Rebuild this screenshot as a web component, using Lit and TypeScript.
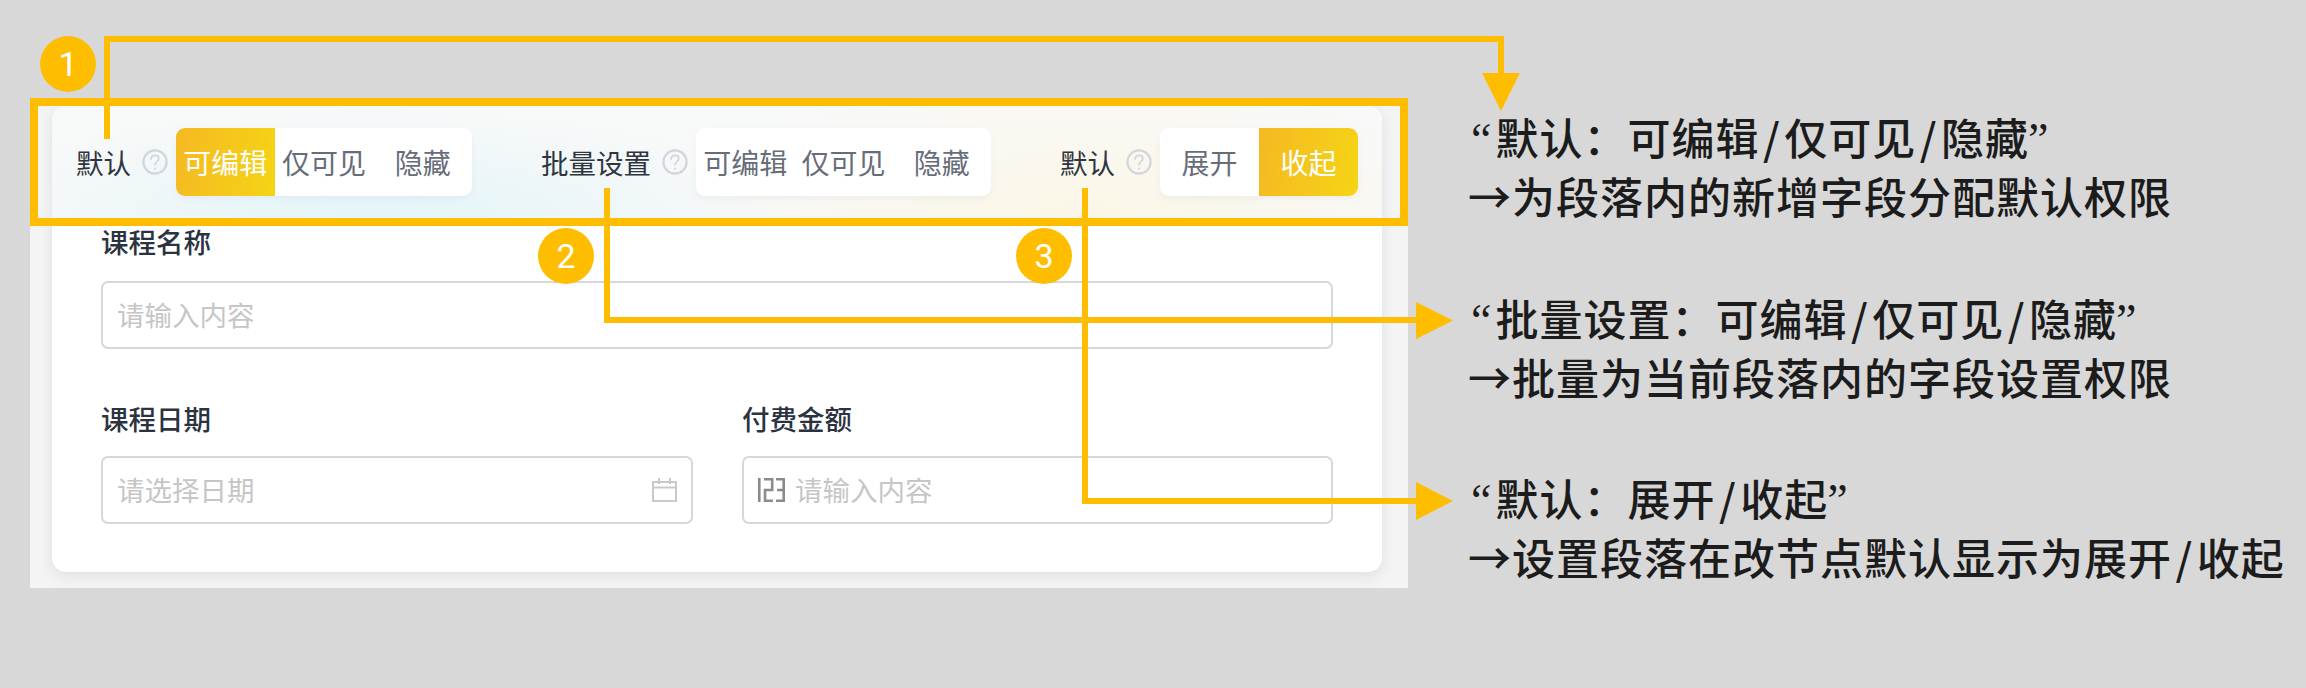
import { LitElement, html, css, svg } from "lit";
import { customElement } from "lit/decorators.js";

const helpIcon = html`<svg class="help" width="26" height="26" viewBox="0 0 26 26" fill="none" stroke="#d2d5dc" stroke-width="2.2"><circle cx="13" cy="13" r="11.6"/><path d="M9.200 10c0-2.200 1.600-3.600 3.800-3.600s3.800 1.400 3.800 3.300c0 2.800-3.800 3-3.800 6" stroke-width="1.8" stroke-linecap="round"/><circle cx="13" cy="19.600" r="1.150" fill="#d2d5dc" stroke="none"/></svg>`;

const calendarIcon = html`<svg class="suffix" width="25" height="24" viewBox="0 0 25 24" fill="none" stroke="#c9c9c9" stroke-width="2"><rect x="1" y="4" width="23" height="19"/><path d="M1 9.5h23M7 0v6M18 0v6"/></svg>`;

const numberIcon = html`<svg class="prefix" width="27" height="24" viewBox="0 0 27 24" fill="none" stroke="#8b8b8b" stroke-width="2.6"><path d="M1.300 0v24M6 1.300h8.200v10.700H7v10.700h8M18 1.300h7.700v21.400H18M19 12h6.700"/></svg>`;

interface Seg { items: string[]; active: number; width: number }

@customElement("app-root")
export class AppRoot extends LitElement {
  static styles = css`
    :host {
      display: block;
      position: relative;
      width: 2306px;
      height: 688px;
      overflow: hidden;
      background: #d8d8d8;
      font-family: "Noto Sans CJK SC", "Noto Sans", sans-serif;
    }
    .page { display: flex; align-items: flex-start; height: 100%; padding: 100px 0 0 30px; box-sizing: border-box; }
    .panel {
      width: 1378px;
      height: 488px;
      box-sizing: border-box;
      padding: 6px 26px 0 22px;
      background: #f4f4f5;
      flex: none;
    }
    .card {
      background: #fff;
      border-radius: 14px;
      box-shadow: 0 4px 14px rgba(40, 50, 70, 0.1);
      height: 466px;
      overflow: hidden;
    }
    .head {
      height: 112px;
      box-sizing: border-box;
      padding: 0 24px 0 24px;
      display: flex;
      align-items: center;
      justify-content: space-between;
      background:
        radial-gradient(ellipse 420px 110px at 320px 112px, #e3f5f9 0%, rgba(227, 245, 249, 0) 100%),
        radial-gradient(ellipse 400px 150px at 1030px 112px, #fbf6e6 0%, rgba(251, 246, 230, 0) 100%),
        linear-gradient(#f8f9f9, #f8f8f8);
    }
    .group { display: flex; align-items: center; }
    .label { font-size: 27.5px; line-height: 40px; color: #2f3540; white-space: nowrap; }
    .help { margin: 0 8px 0 11px; flex: none; }
    .seg {
      display: flex;
      height: 68px;
      background: #fff;
      border-radius: 9px;
      overflow: hidden;
      box-shadow: 0 3px 6px rgba(90, 110, 130, 0.06);
    }
    .seg span {
      flex: 1;
      display: flex;
      align-items: center;
      justify-content: center;
      font-size: 28px;
      color: #666d78;
      white-space: nowrap;
    }
    .seg span.on { background: linear-gradient(100deg, #f5b923, #f5d415); color: #fff; }
    .body { padding: 3px 49px 0; display: grid; grid-template-columns: 592px 591px; column-gap: 49px; row-gap: 49px; }
    .field.wide { grid-column: 1 / 3; }
    .field-label { font-size: 27.5px; line-height: 40px; font-weight: 500; color: #2b3341; margin-bottom: 18px; }
    .field.wide .field-label { margin-bottom: 20px; }
    .input {
      height: 68px;
      box-sizing: border-box;
      border: 2px solid #d6d7dc;
      border-radius: 7px;
      display: flex;
      align-items: center;
      padding: 0 14px;
      font-size: 27.5px;
      color: #c6c6c6;
    }
    .input span { padding-bottom: 3px; }
    .grow { flex: 1; }
    .prefix { margin-right: 10px; flex: none; }
    .suffix { flex: none; }
    .notes { margin-left: 60px; padding-top: 7px; display: flex; flex-direction: column; row-gap: 62.5px; }
    .note {
      font-size: 43px;
      line-height: 59px;
      font-weight: 500;
      letter-spacing: 1px;
      color: #1c1c1c;
      white-space: nowrap;
      font-family: "Noto Sans CJK SC", sans-serif;
    }
    .quote { font-family: "Liberation Serif", serif; font-size: 46px; line-height: 0; font-weight: 400; }
    .open { margin-left: 3px; margin-right: 3px; }
    .close { margin-left: -1px; }
    .slash { padding: 0 3.5px; }
    .overlay { position: absolute; left: 0; top: 0; pointer-events: none; }
    .num { font-family: Roboto, "Liberation Sans", sans-serif; font-size: 34px; fill: #fff; text-anchor: middle; }
  `;

  private seg(s: Seg) {
    return html`<div class="seg" style="width:${s.width}px">
      ${s.items.map((t, i) => html`<span class=${i === s.active ? "on" : ""}>${t}</span>`)}
    </div>`;
  }

  private group(label: string, s: Seg) {
    return html`<div class="group"><span class="label">${label}</span>${helpIcon}${this.seg(s)}</div>`;
  }

  private overlay() {
    const c = "#ffbd00";
    const badge = (x: number, y: number, n: string) => svg`
      <circle cx=${x} cy=${y} r="28" fill=${c}/>
      <text class="num" x=${x} y=${y + 12}>${n}</text>`;
    return html`<svg class="overlay" width="2306" height="688" viewBox="0 0 2306 688" fill="none">
      <rect x="34" y="102" width="1370" height="120" stroke=${c} stroke-width="8"/>
      <path d="M107 139V39H1501V80" stroke=${c} stroke-width="6"/>
      <path d="M1482 73H1520L1501 111Z" fill=${c}/>
      <path d="M607 188V320H1420" stroke=${c} stroke-width="6"/>
      <path d="M1416 302V339L1453 320.500Z" fill=${c}/>
      <path d="M1085 188V501H1420" stroke=${c} stroke-width="6"/>
      <path d="M1416 482V520L1453 501Z" fill=${c}/>
      ${badge(68, 64, "1")}
      ${badge(566, 256, "2")}
      ${badge(1044, 256, "3")}
    </svg>`;
  }

  private slashed(t: string) {
    const parts = t.split("/");
    return parts.map((p, i) => (i < parts.length - 1 ? html`${p}<span class="slash">/</span>` : html`${p}`));
  }

  private quoted(t: string) {
    return html`<div><span class="quote open">“</span>${this.slashed(t)}<span class="quote close">”</span></div>`;
  }

  private arrowLine(t: string) {
    return html`<div>→${this.slashed(t)}</div>`;
  }

  render() {
    return html`
      <div class="page" lang="zh-CN">
        <section class="panel">
          <div class="card">
            <div class="head">
              ${this.group("默认", { items: ["可编辑", "仅可见", "隐藏"], active: 0, width: 296 })}
              ${this.group("批量设置", { items: ["可编辑", "仅可见", "隐藏"], active: -1, width: 295 })}
              ${this.group("默认", { items: ["展开", "收起"], active: 1, width: 198 })}
            </div>
            <div class="body">
              <div class="field wide">
                <div class="field-label">课程名称</div>
                <div class="input"><span>请输入内容</span></div>
              </div>
              <div class="field">
                <div class="field-label">课程日期</div>
                <div class="input"><span class="grow">请选择日期</span>${calendarIcon}</div>
              </div>
              <div class="field">
                <div class="field-label">付费金额</div>
                <div class="input">${numberIcon}<span>请输入内容</span></div>
              </div>
            </div>
          </div>
        </section>
        <section class="notes">
          <div class="note">${this.quoted("默认：可编辑/仅可见/隐藏")}${this.arrowLine("为段落内的新增字段分配默认权限")}</div>
          <div class="note">${this.quoted("批量设置：可编辑/仅可见/隐藏")}${this.arrowLine("批量为当前段落内的字段设置权限")}</div>
          <div class="note">${this.quoted("默认：展开/收起")}${this.arrowLine("设置段落在改节点默认显示为展开/收起")}</div>
        </section>
      </div>
      ${this.overlay()}
    `;
  }
}
